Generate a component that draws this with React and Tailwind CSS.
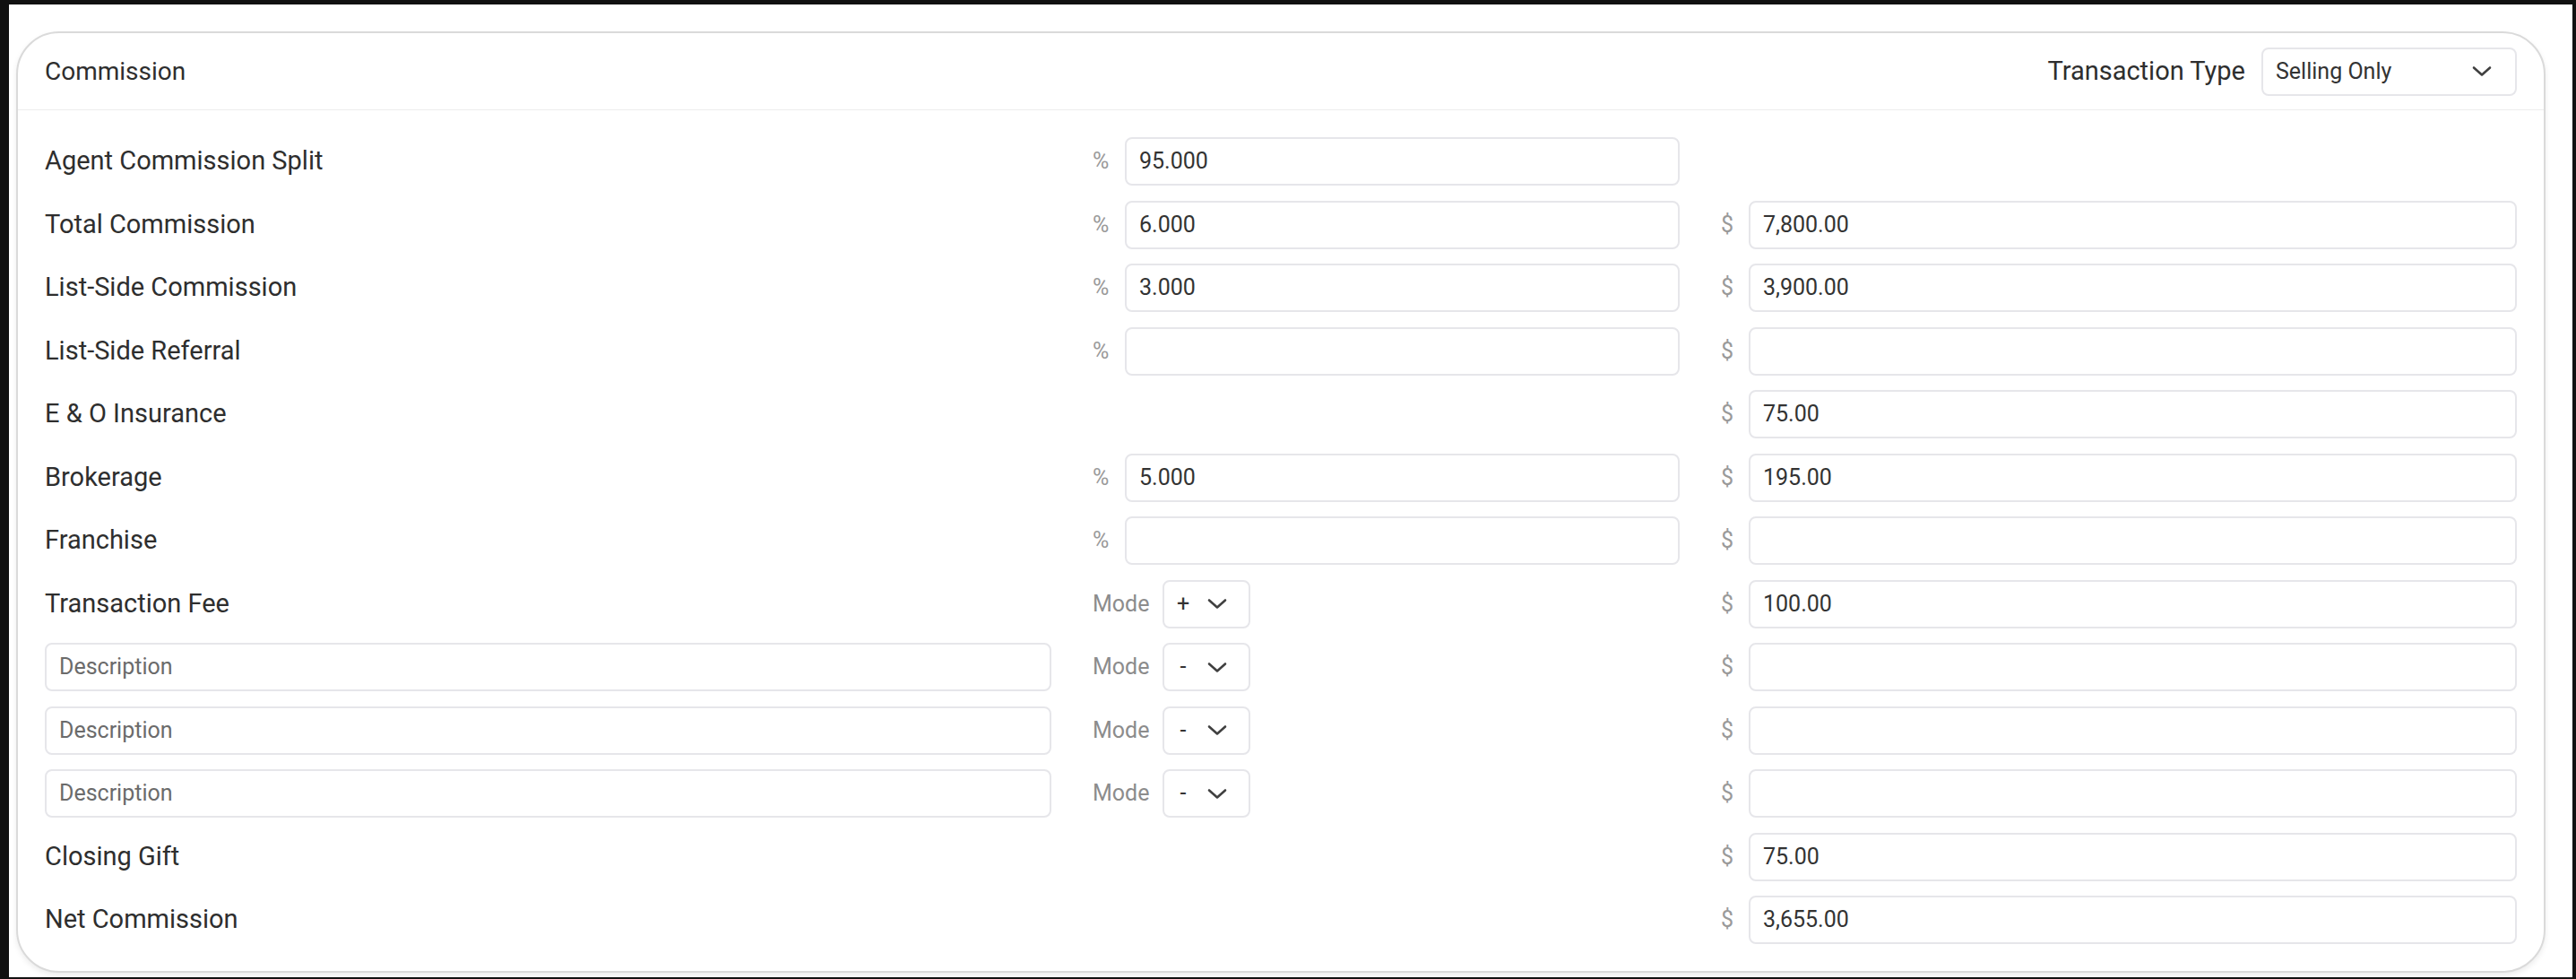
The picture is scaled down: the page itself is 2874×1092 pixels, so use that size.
import React from 'react';

const Chevron = () => (
  <svg width="22" height="13" viewBox="0 0 22 13" fill="none" className="shrink-0">
    <path d="M2 2.5 L11 10.5 L20 2.5" stroke="#404040" strokeWidth="2.6" strokeLinecap="round" strokeLinejoin="round" />
  </svg>
);

const Field = ({ value, placeholder }) => (
  <div className="flex-1 h-[54px] border-2 border-[#e6e6ea] rounded-[8px] bg-white flex items-center px-[14px] text-[25px] text-[#333]">
    {value ? value : <span className="text-[#6b6b6b]">{placeholder}</span>}
  </div>
);

const rows = [
  { label: 'Agent Commission Split', pct: '95.000' },
  { label: 'Total Commission', pct: '6.000', usd: '7,800.00' },
  { label: 'List-Side Commission', pct: '3.000', usd: '3,900.00' },
  { label: 'List-Side Referral', pct: '', usd: '' },
  { label: 'E & O Insurance', usd: '75.00' },
  { label: 'Brokerage', pct: '5.000', usd: '195.00' },
  { label: 'Franchise', pct: '', usd: '' },
  { label: 'Transaction Fee', mode: '+', usd: '100.00' },
  { desc: true, mode: '-', usd: '' },
  { desc: true, mode: '-', usd: '' },
  { desc: true, mode: '-', usd: '' },
  { label: 'Closing Gift', usd: '75.00' },
  { label: 'Net Commission', usd: '3,655.00' },
];

export default function App() {
  return (
    <div className="h-[1092px] bg-[#111111] pl-[10px] pr-[4px] pt-[5px] pb-[2px] font-[Roboto,sans-serif]">
      <div className="h-full bg-white pl-[8px] pr-[30px] pt-[30px] overflow-hidden">
        <div className="border-2 border-[#dadada] rounded-[48px] bg-white shadow-[0_3px_6px_rgba(0,0,0,0.08)]">
          {/* Header */}
          <div className="h-[86px] flex items-center justify-between px-[30px] border-b border-[#ececec]">
            <span className="text-[28px] text-[#2e2e2e]">Commission</span>
            <div className="flex items-center gap-[18px]">
              <span className="text-[29px] text-[#2e2e2e]">Transaction Type</span>
              <div className="w-[285px] h-[54px] border-2 border-[#e6e6ea] rounded-[8px] flex items-center justify-between pl-[14px] pr-[26px] text-[25px] text-[#333]">
                <span>Selling Only</span>
                <Chevron />
              </div>
            </div>
          </div>

          {/* Rows */}
          <div className="px-[30px] pt-[30px] pb-[30px] grid grid-cols-[1123px_655px_888px] gap-x-[46px] gap-y-[16.5px]">
            {rows.map((r, i) => (
              <React.Fragment key={i}>
                <div className="h-[54px] flex items-center">
                  {r.desc ? (
                    <Field placeholder="Description" />
                  ) : (
                    <span className="text-[29px] text-[#2e2e2e]">{r.label}</span>
                  )}
                </div>
                <div className="h-[54px] flex items-center">
                  {r.pct !== undefined && (
                    <>
                      <span className="w-[36px] text-[25px] text-[#9a9a9a]">%</span>
                      <Field value={r.pct} />
                    </>
                  )}
                  {r.mode && (
                    <>
                      <span className="w-[78px] text-[25px] text-[#8c8c8c]">Mode</span>
                      <div className="w-[98px] h-[54px] border-2 border-[#e6e6ea] rounded-[8px] flex items-center pl-[14px] gap-[20px] text-[25px] text-[#333]">
                        <span className="w-[14px] text-center">{r.mode}</span>
                        <Chevron />
                      </div>
                    </>
                  )}
                </div>
                <div className="h-[54px] flex items-center">
                  {r.usd !== undefined && (
                    <>
                      <span className="w-[31px] text-[25px] text-[#9a9a9a]">$</span>
                      <Field value={r.usd} />
                    </>
                  )}
                </div>
              </React.Fragment>
            ))}
          </div>
        </div>
      </div>
    </div>
  );
}
